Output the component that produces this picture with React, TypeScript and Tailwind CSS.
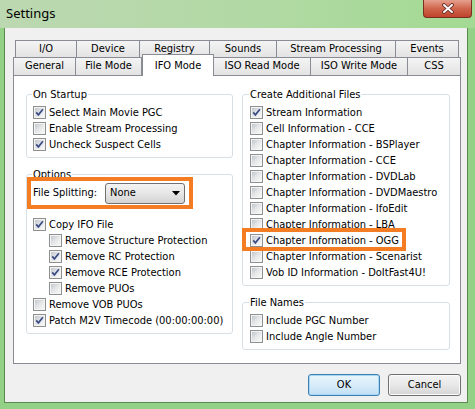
import React from "react";

const topTabs = [
    { label: "I/O", w: "w-[62px]" },
    { label: "Device", w: "w-[63px]" },
    { label: "Registry", w: "w-[70px]" },
    { label: "Sounds", w: "w-[67px]" },
    { label: "Stream Processing", w: "w-[119px]" },
    { label: "Events", w: "w-[63px]" },
];

const frontTabs = [
    { label: "General", w: "w-[63px]" },
    { label: "File Mode", w: "w-[66px]" },
    { label: "IFO Mode", w: "w-[72px]", selected: true },
    { label: "ISO Read Mode", w: "w-[97px]" },
    { label: "ISO Write Mode", w: "w-[97px]" },
    { label: "CSS", w: "w-[53px]" },
];

const extraFiles = [
    { label: "Stream Information", checked: true },
    { label: "Cell Information - CCE" },
    { label: "Chapter Information - BSPlayer" },
    { label: "Chapter Information - CCE" },
    { label: "Chapter Information - DVDLab" },
    { label: "Chapter Information - DVDMaestro" },
    { label: "Chapter Information - IfoEdit" },
    { label: "Chapter Information - LBA" },
    { label: "Chapter Information - OGG", checked: true, marked: true },
    { label: "Chapter Information - Scenarist" },
    { label: "Vob ID Information - DoItFast4U!" },
];

const CheckBox = ({ checked }: { checked?: boolean }) => (
    <span className="flex h-[13px] w-[13px] shrink-0 items-center justify-center border border-[#8e8f8f] bg-[#f4f4f4]">
        <span className="flex h-[9px] w-[9px] items-center justify-center bg-gradient-to-br from-[#c3c7cc] via-[#e4e6e8] to-[#f8f8f8]">
            {checked && (
                <svg width="9" height="9" viewBox="0 0 9 9">
                    <path d="M1.2 4.4 L3.4 6.9 L7.9 1.2" fill="none" stroke="#3b4c85" strokeWidth="1.7" />
                </svg>
            )}
        </span>
    </span>
);

const Row = ({ label, checked, indent }: { label: string; checked?: boolean; indent?: boolean }) => (
    <div className={`flex h-4 items-center gap-[3px] ${indent ? "ml-[16px]" : ""}`}>
        <CheckBox checked={checked} />
        <span className="whitespace-nowrap leading-[13px]">{label}</span>
    </div>
);

const Group = ({ title, className, children }: { title: string; className?: string; children: React.ReactNode }) => (
    <fieldset className={`rounded-[3px] border border-[#d5dfe5] pl-[6px] ${className ?? ""}`}>
        <legend className="-ml-[1px] px-[1px] leading-[13px]">{title}</legend>
        {children}
    </fieldset>
);

const Tab = ({ label, w, selected, first }: { label: string; w: string; selected?: boolean; first?: boolean }) =>
    selected ? (
        <div
            className={`relative z-10 -mt-[3px] flex h-[22px] ${w} items-start justify-center border-x border-t border-[#898c95] bg-white pt-[3px]`}
        >
            {label}
        </div>
    ) : (
        <div
            className={`flex h-full ${w} items-center justify-center border-t border-r border-[#898c95] bg-gradient-to-b from-[#f4f4f4] to-[#e3e3e3] ${
                first ? "border-l" : ""
            }`}
        >
            {label}
        </div>
    );

export default function App() {
    return (
        <div className="flex h-[409px] w-[475px] flex-col overflow-hidden bg-[#93d186] font-['DejaVu_Sans_Condensed','Liberation_Sans',sans-serif] text-[11px] text-black">
            {/* title bar */}
            <div className="flex h-[28px] shrink-0 justify-between bg-gradient-to-r from-[#bcd8b1] via-[#b2d9a5] to-[#a3da93]">
                <span className="pl-[6px] pt-[4px] font-['Noto_Sans',sans-serif] text-[13px] leading-[18px]">Settings</span>
                <div className="mr-[3px] flex h-[18px] w-[49px] items-center justify-center rounded-b-[4px] border-x border-b border-[#7a2d22] bg-gradient-to-b from-[#e5a08e] via-[#d0654d] to-[#c0432b]">
                    <svg width="14" height="11" viewBox="0 0 14 11">
                        <path d="M3 2 L11 9 M11 2 L3 9" stroke="#5a231b" strokeWidth="3.6" strokeLinecap="round" />
                        <path d="M3 2 L11 9 M11 2 L3 9" stroke="#ffffff" strokeWidth="2" strokeLinecap="round" />
                    </svg>
                </div>
            </div>

            {/* client area */}
            <div className="mb-[6px] ml-[4px] mr-[7px] flex flex-1 flex-col border-x border-b border-[#5b8a51] bg-[#f0f0f0] pl-[8px] pt-[12px]">
                <div className="flex w-[448px] flex-col">
                    <div className="flex h-[17px] px-[2px]">
                        {topTabs.map((t, i) => (
                            <Tab key={t.label} label={t.label} w={t.w} first={i === 0} />
                        ))}
                    </div>
                    <div className="flex h-[18px]">
                        {frontTabs.map((t, i) => (
                            <Tab key={t.label} label={t.label} w={t.w} selected={t.selected} first={i === 0} />
                        ))}
                    </div>

                    {/* tab page */}
                    <div className="flex h-[289px] gap-[9px] border border-[#898c95] bg-white pl-[12px] pt-[12px]">
                        <div className="flex w-[207px] flex-col">
                            <Group title="On Startup" className="pb-[5px]">
                                <div className="pt-[3px]">
                                    <Row label="Select Main Movie PGC" checked />
                                    <Row label="Enable Stream Processing" />
                                    <Row label="Uncheck Suspect Cells" checked />
                                </div>
                            </Group>
                            <Group title="Options" className="mt-[10px] pb-[5px]">
                                <div className="relative mt-[2px] flex h-[21px] items-center">
                                    <span className="w-[72px] whitespace-nowrap">File Splitting:</span>
                                    <div className="flex h-[21px] w-[80px] items-center justify-between rounded-[3px] border border-[#707070] bg-gradient-to-b from-[#f3f3f3] via-[#e6e6e6] to-[#d3d3d3] pl-[4px] pr-[4px]">
                                        <span>None</span>
                                        <svg width="8" height="5" viewBox="0 0 8 5">
                                            <path d="M0 0 H8 L4 4.5 Z" fill="#000" />
                                        </svg>
                                    </div>
                                    <div className="absolute -left-[6px] -top-[6px] h-[32px] w-[166px] border-4 border-[#f47d24]" />
                                </div>
                                <div className="mt-[12px]">
                                    <Row label="Copy IFO File" checked />
                                    <Row label="Remove Structure Protection" indent />
                                    <Row label="Remove RC Protection" checked indent />
                                    <Row label="Remove RCE Protection" checked indent />
                                    <Row label="Remove PUOs" indent />
                                    <Row label="Remove VOB PUOs" />
                                    <Row label="Patch M2V Timecode (00:00:00:00)" checked />
                                </div>
                            </Group>
                        </div>

                        <div className="flex w-[208px] flex-col">
                            <Group title="Create Additional Files" className="pb-[5px] pl-[7px]">
                                <div className="pt-[3px]">
                                    {extraFiles.map((f) =>
                                        f.marked ? (
                                            <div key={f.label} className="relative">
                                                <Row label={f.label} checked={f.checked} />
                                                <div className="absolute -left-[8px] -top-[4px] h-[23px] w-[164px] border-4 border-[#f47d24]" />
                                            </div>
                                        ) : (
                                            <Row key={f.label} label={f.label} checked={f.checked} />
                                        )
                                    )}
                                </div>
                            </Group>
                            <Group title="File Names" className="mt-[10px] pb-[5px] pl-[7px]">
                                <div className="pt-[3px]">
                                    <Row label="Include PGC Number" />
                                    <Row label="Include Angle Number" />
                                </div>
                            </Group>
                        </div>
                    </div>

                    {/* buttons */}
                    <div className="mt-[10px] flex justify-end gap-[8px]">
                        <button className="h-[22px] w-[72px] rounded-[3px] border border-[#3c7fb1] bg-gradient-to-b from-[#e9f5fc] via-[#d8ecf9] to-[#bfe0f5] shadow-[inset_0_0_0_1px_#a7d8f3]">
                            OK
                        </button>
                        <button className="h-[22px] w-[73px] rounded-[3px] border border-[#707070] bg-gradient-to-b from-[#f3f3f3] via-[#e8e8e8] to-[#d4d4d4] shadow-[inset_0_0_0_1px_#fbfbfb]">
                            Cancel
                        </button>
                    </div>
                </div>
            </div>
        </div>
    );
}
